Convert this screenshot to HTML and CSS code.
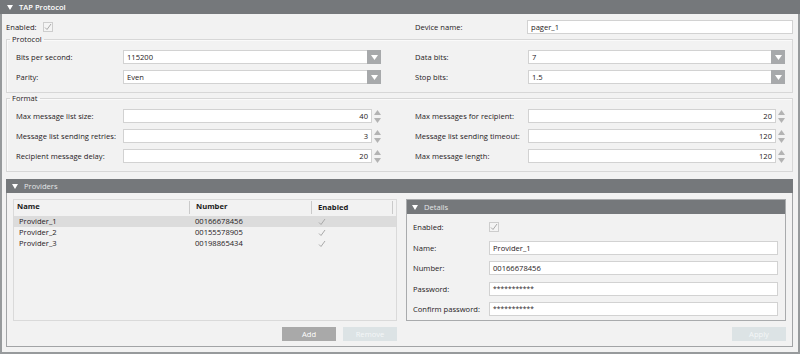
FILE: index.html
```html
<!DOCTYPE html>
<html>
<head>
<meta charset="utf-8">
<title>TAP Protocol</title>
<link rel="stylesheet" href="styles.css">
</head>
<body>
<div class="outer">
  <div class="bar bar-main">
    <svg class="tri" width="6" height="5" viewBox="0 0 6 5"><polygon points="0,0 6,0 3,5" fill="#fff"/></svg>
    <span>TAP Protocol</span>
  </div>
  <div class="main">
    <div class="toprow">
      <div class="enabled">
        <span>Enabled:</span>
        <span class="cb"><svg width="8" height="8" viewBox="0 0 8 8"><polyline points="1,4.5 3,6.5 7,1" fill="none" stroke="#a9a9a9" stroke-width="1"/></svg></span>
      </div>
      <span class="lbl-r">Device name:</span>
      <div class="inp">pager_1</div>
    </div>

    <fieldset class="group">
      <legend>Protocol</legend>
      <div class="grid">
        <span class="lbl">Bits per second:</span>
        <div class="sel"><span class="val">115200</span><span class="arr"><svg width="7" height="5" viewBox="0 0 7 5"><polygon points="0,0 7,0 3.5,5" fill="#fff"/></svg></span></div>
        <span></span>
        <span class="lbl">Data bits:</span>
        <div class="sel"><span class="val">7</span><span class="arr"><svg width="7" height="5" viewBox="0 0 7 5"><polygon points="0,0 7,0 3.5,5" fill="#fff"/></svg></span></div>

        <span class="lbl">Parity:</span>
        <div class="sel"><span class="val">Even</span><span class="arr"><svg width="7" height="5" viewBox="0 0 7 5"><polygon points="0,0 7,0 3.5,5" fill="#fff"/></svg></span></div>
        <span></span>
        <span class="lbl">Stop bits:</span>
        <div class="sel"><span class="val">1.5</span><span class="arr"><svg width="7" height="5" viewBox="0 0 7 5"><polygon points="0,0 7,0 3.5,5" fill="#fff"/></svg></span></div>
      </div>
    </fieldset>

    <fieldset class="group">
      <legend>Format</legend>
      <div class="grid">
        <span class="lbl">Max message list size:</span>
        <div class="num"><div class="inp right">40</div><svg class="spin" width="7" height="13" viewBox="0 0 7 13"><polygon points="3.5,0 7,5 0,5" fill="#b3b3b3"/><polygon points="0,8 7,8 3.5,13" fill="#b3b3b3"/></svg></div>
        <span></span>
        <span class="lbl">Max messages for recipient:</span>
        <div class="num"><div class="inp right">20</div><svg class="spin" width="7" height="13" viewBox="0 0 7 13"><polygon points="3.5,0 7,5 0,5" fill="#b3b3b3"/><polygon points="0,8 7,8 3.5,13" fill="#b3b3b3"/></svg></div>

        <span class="lbl">Message list sending retries:</span>
        <div class="num"><div class="inp right">3</div><svg class="spin" width="7" height="13" viewBox="0 0 7 13"><polygon points="3.5,0 7,5 0,5" fill="#b3b3b3"/><polygon points="0,8 7,8 3.5,13" fill="#b3b3b3"/></svg></div>
        <span></span>
        <span class="lbl">Message list sending timeout:</span>
        <div class="num"><div class="inp right">120</div><svg class="spin" width="7" height="13" viewBox="0 0 7 13"><polygon points="3.5,0 7,5 0,5" fill="#b3b3b3"/><polygon points="0,8 7,8 3.5,13" fill="#b3b3b3"/></svg></div>

        <span class="lbl">Recipient message delay:</span>
        <div class="num"><div class="inp right">20</div><svg class="spin" width="7" height="13" viewBox="0 0 7 13"><polygon points="3.5,0 7,5 0,5" fill="#b3b3b3"/><polygon points="0,8 7,8 3.5,13" fill="#b3b3b3"/></svg></div>
        <span></span>
        <span class="lbl">Max message length:</span>
        <div class="num"><div class="inp right">120</div><svg class="spin" width="7" height="13" viewBox="0 0 7 13"><polygon points="3.5,0 7,5 0,5" fill="#b3b3b3"/><polygon points="0,8 7,8 3.5,13" fill="#b3b3b3"/></svg></div>
      </div>
    </fieldset>

    <div class="providers">
      <div class="bar bar-sub">
        <svg class="tri" width="6" height="5" viewBox="0 0 6 5"><polygon points="0,0 6,0 3,5" fill="#fff"/></svg>
        <span>Providers</span>
      </div>
      <div class="prov-body">
        <div class="col">
          <div class="table">
            <div class="trow thead">
              <span class="c1">Name</span><span class="c2">Number</span><span class="c3">Enabled</span>
            </div>
            <div class="trow selected">
              <span class="c1">Provider_1</span><span class="c2">00166678456</span><span class="c3"><svg width="8" height="8" viewBox="0 0 8 8"><polyline points="1,4.5 3,6.5 7,1" fill="none" stroke="#a9a9a9" stroke-width="1"/></svg></span>
            </div>
            <div class="trow">
              <span class="c1">Provider_2</span><span class="c2">00155578905</span><span class="c3"><svg width="8" height="8" viewBox="0 0 8 8"><polyline points="1,4.5 3,6.5 7,1" fill="none" stroke="#a9a9a9" stroke-width="1"/></svg></span>
            </div>
            <div class="trow">
              <span class="c1">Provider_3</span><span class="c2">00198865434</span><span class="c3"><svg width="8" height="8" viewBox="0 0 8 8"><polyline points="1,4.5 3,6.5 7,1" fill="none" stroke="#a9a9a9" stroke-width="1"/></svg></span>
            </div>
          </div>
          <div class="btns">
            <span class="btn btn-dark">Add</span>
            <span class="btn btn-off">Remove</span>
          </div>
        </div>
        <div class="col">
          <div class="details">
            <div class="bar bar-sub">
              <svg class="tri" width="6" height="5" viewBox="0 0 6 5"><polygon points="0,0 6,0 3,5" fill="#fff"/></svg>
              <span>Details</span>
            </div>
            <div class="det-body">
              <span class="lbl">Enabled:</span>
              <span class="cbwrap"><span class="cb"><svg width="8" height="8" viewBox="0 0 8 8"><polyline points="1,4.5 3,6.5 7,1" fill="none" stroke="#a9a9a9" stroke-width="1"/></svg></span></span>
              <span class="lbl">Name:</span>
              <div class="inp">Provider_1</div>
              <span class="lbl">Number:</span>
              <div class="inp">00166678456</div>
              <span class="lbl">Password:</span>
              <div class="inp pw">***********</div>
              <span class="lbl">Confirm password:</span>
              <div class="inp pw">***********</div>
            </div>
          </div>
          <div class="btns">
            <span class="btn btn-off">Apply</span>
          </div>
        </div>
      </div>
    </div>
  </div>
</div>
</body>
</html>
```
FILE: styles.css
```css
* { box-sizing: border-box; }
html, body { margin: 0; padding: 0; background: #ffffff; }
body {
  font-family: "Open Sans", "Noto Sans", sans-serif;
  font-size: 7.6px;
  color: #1f2123;
  width: 800px;
  height: 354px;
  overflow: hidden;
}
.outer {
  width: 800px;
  height: 354px;
  border: 2px solid #979a9c;
  border-top: 0;
  background: #f2f2f2;
  display: flex;
  flex-direction: column;
}
.bar {
  display: flex;
  align-items: center;
  background: #75787b;
  color: #ffffff;
  height: 14px;
  flex: none;
  padding-left: 5px;
}
.bar .tri { margin-right: 6px; flex: none; }
.bar-main { margin: 0 -2px; padding-left: 7px; font-weight: 600; }
.bar-sub { color: #e4e6e7; }

.main {
  flex: 1;
  display: flex;
  flex-direction: column;
  padding: 0 5px 5px 4px;
}
.toprow {
  display: flex;
  align-items: center;
  height: 15px;
  margin-top: 5px;
}
.enabled {
  width: 408px;
  display: flex;
  align-items: center;
}
.enabled .cb { margin-left: 6px; }
.lbl-r { width: 113px; padding-left: 1px; }
.toprow .inp { flex: 1; }

.cb {
  display: inline-flex;
  align-items: center;
  justify-content: center;
  width: 10px;
  height: 10px;
  border: 1px solid #cdcdcd;
  background: #f4f4f4;
}

.inp {
  height: 14px;
  line-height: 12px;
  border: 1px solid #d2d2d2;
  background: #ffffff;
  padding: 0 3px;
  white-space: nowrap;
  overflow: hidden;
}
.inp.right { text-align: right; }
.inp.pw { font-size: 6.6px; letter-spacing: 0.1px; }

.group {
  margin: 0;
  border: 1px solid #d7d7d7;
  box-shadow: inset 1px 1px 0 #fafafa;
  padding: 6px 7px 8px 2px;
}
.group legend {
  line-height: 10px;
  padding: 0 2px;
  margin-left: 1px;
}
.grid {
  display: grid;
  grid-template-columns: 107px 258px 1fr 113px 257px;
  grid-auto-rows: 14px;
  row-gap: 6px;
  align-items: center;
  margin-left: 7px;
}
.sel {
  height: 14px;
  display: flex;
  border: 1px solid #d2d2d2;
  border-right: 0;
  background: #ffffff;
}
.sel .val { flex: 1; line-height: 12px; padding-left: 3px; }
.sel .arr {
  width: 14px;
  height: 14px;
  margin-top: -1px;
  background: #a7a9ab;
  display: flex;
  align-items: center;
  justify-content: center;
}
.num {
  display: flex;
  align-items: center;
  gap: 2px;
}
.num .inp { flex: 1; }
.num .spin { flex: none; }

.providers {
  flex: 1;
  margin-top: 7px;
  border: 1px solid #a2a4a6;
  border-width: 0 1px 1px 1px;
  display: flex;
  flex-direction: column;
}
.providers > .bar { margin: 0 -1px; padding-left: 6px; }
.prov-body {
  flex: 1;
  display: grid;
  grid-template-columns: 384px 1fr;
  column-gap: 9px;
  padding: 6px 6px 5px 6px;
}
.col {
  display: flex;
  flex-direction: column;
}
.table {
  flex: 1;
  border: 1px solid #dadada;
  background: #f2f2f2;
}
.trow {
  display: grid;
  grid-template-columns: 176px 122px 81px;
  height: 11px;
  line-height: 11px;
  white-space: nowrap;
}
.trow .c1 { padding-left: 5px; }
.trow .c2 { padding-left: 5px; }
.trow .c3 { padding-left: 6px; display: flex; align-items: center; }
.thead {
  height: 15px;
  line-height: 13px;
  font-weight: 700;
  color: #1a1a1a;
  margin-bottom: 1px;
}
.thead span { border-right: 1px solid #cacaca; margin: 1px 0; line-height: 11px; }
.thead .c1 { padding-left: 3px; }
.thead .c2 { padding-left: 6px; }
.thead .c3 { padding-left: 6px; }
.selected { background: #dcdcdc; }

.btns {
  display: flex;
  justify-content: flex-end;
  gap: 7px;
  margin-top: 6px;
}
.btn {
  width: 54px;
  height: 14px;
  line-height: 14px;
  text-align: center;
  color: #ffffff;
}
.btn-dark { background: #a9a9a9; }
.btn-off { background: #dce3e5; color: #f4f7f8; }

.details {
  flex: 1;
  border: 1px solid #a9abad;
  display: flex;
  flex-direction: column;
}
.details > .bar { padding-left: 5px; }
.det-body {
  display: grid;
  grid-template-columns: 76px 1fr;
  grid-auto-rows: 14px;
  row-gap: 6.5px;
  align-items: center;
  padding: 6px 7px 0 6px;
}
.cbwrap { display: flex; align-items: center; }
```
